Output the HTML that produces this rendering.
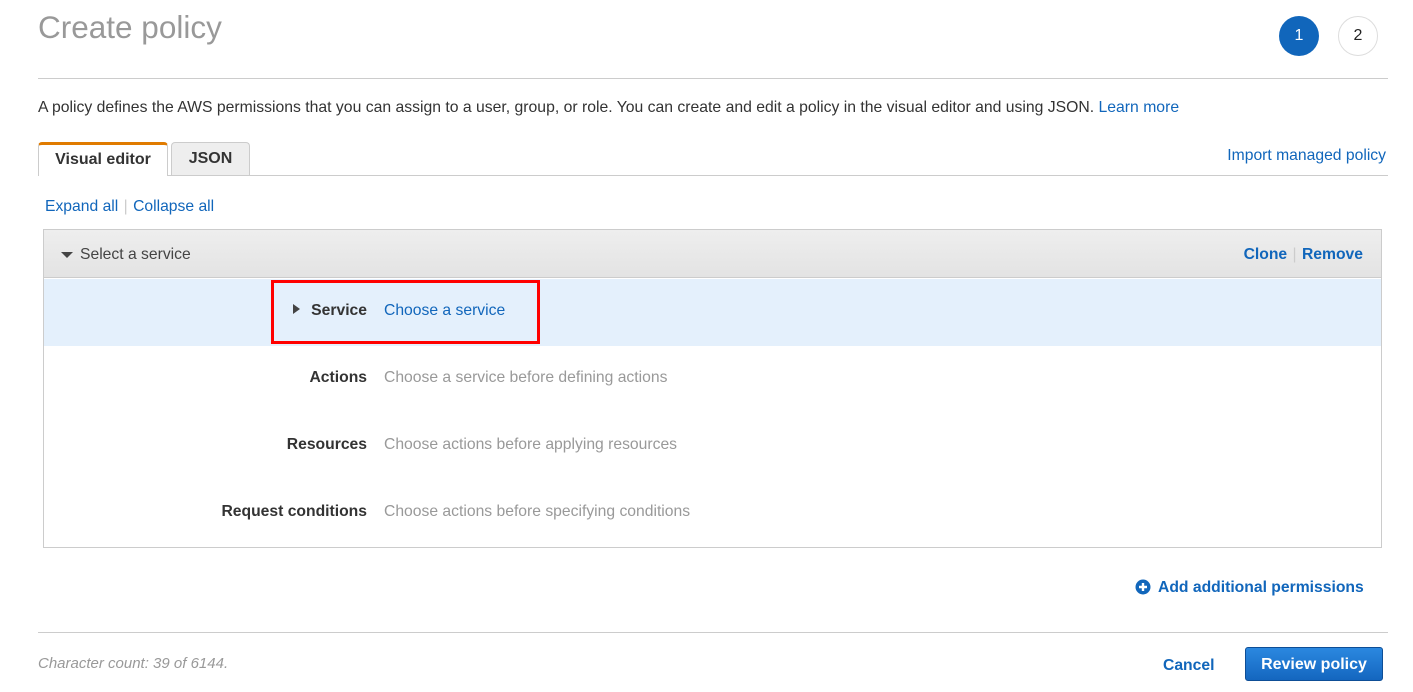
<!DOCTYPE html>
<html><head><style>
*{box-sizing:border-box;margin:0;padding:0}
body{width:1413px;height:692px;background:#fff;font-family:"Liberation Sans",Arial,sans-serif;position:relative;overflow:hidden;color:#333}
.a{position:absolute;white-space:nowrap}
.link{color:#1166bb}
.lbl{font-weight:bold;font-size:15.7px;color:#333;text-align:right;width:200px;left:167px}
.val{left:384px;font-size:15.7px;color:#999}
</style></head><body>
<div class="a" style="left:38px;top:9px;font-size:31.5px;color:#999">Create policy</div>
<div class="a" style="left:1279px;top:16px;width:40px;height:40px;border-radius:50%;background:#1166bb;color:#fff;font-size:16px;text-align:center;line-height:40px">1</div>
<div class="a" style="left:1338px;top:16px;width:40px;height:40px;border-radius:50%;border:1px solid #ddd;color:#222;font-size:16px;text-align:center;line-height:38px">2</div>
<div class="a" style="left:38px;top:78px;width:1350px;height:1px;background:#ccc"></div>
<div class="a" style="left:38px;top:99px;font-size:15.75px;color:#333">A policy defines the AWS permissions that you can assign to a user, group, or role. You can create and edit a policy in the visual editor and using JSON. <span class="link">Learn more</span></div>
<div class="a" style="left:38px;top:175px;width:1350px;height:1px;background:#ccc"></div>
<div class="a" style="left:38px;top:142px;width:130px;height:34px;background:#fff;border:1px solid #ccc;border-bottom:none;border-top:3px solid #e07b00;border-radius:4px 4px 0 0;font-weight:bold;font-size:16px;text-align:center;line-height:29px;color:#333">Visual editor</div>
<div class="a" style="left:171px;top:142px;width:79px;height:33px;background:#eee;border:1px solid #ccc;border-bottom:none;border-radius:4px 4px 0 0;font-weight:bold;font-size:16px;text-align:center;line-height:32px;color:#333">JSON</div>
<div class="a link" style="right:27px;top:147px;font-size:15.7px">Import managed policy</div>
<div class="a" style="left:45px;top:198px;font-size:15.7px"><span class="link">Expand all</span> <span style="color:#ccc;margin:0 1px">|</span> <span class="link">Collapse all</span></div>
<div class="a" style="left:43px;top:229px;width:1339px;height:319px;border:1px solid #ccc"></div>
<div class="a" style="left:44px;top:230px;width:1337px;height:48px;background:linear-gradient(#eee,#e3e3e3);border-bottom:1px solid #ccc"></div>
<div class="a" style="left:61px;top:252px;width:0;height:0;border-left:6px solid transparent;border-right:6px solid transparent;border-top:6px solid #444"></div>
<div class="a" style="left:80px;top:246px;font-size:15.7px;color:#444">Select a service</div>
<div class="a" style="right:50px;top:246px;font-size:15.7px;font-weight:bold"><span class="link">Clone</span> <span style="color:#ccc;font-weight:normal;margin:0 1px">|</span> <span class="link">Remove</span></div>
<div class="a" style="left:44px;top:279px;width:1337px;height:67px;background:#e4f0fc"></div>
<div class="a" style="left:271px;top:280px;width:269px;height:64px;border:3px solid #f00"></div>
<div class="a" style="left:293px;top:304px;width:0;height:0;border-top:5px solid transparent;border-bottom:5px solid transparent;border-left:7px solid #444"></div>
<div class="a lbl" style="top:302px">Service</div>
<div class="a val link" style="top:302px;color:#1166bb">Choose a service</div>
<div class="a lbl" style="top:369px">Actions</div>
<div class="a val" style="top:369px">Choose a service before defining actions</div>
<div class="a lbl" style="top:436px">Resources</div>
<div class="a val" style="top:436px">Choose actions before applying resources</div>
<div class="a lbl" style="top:503px">Request conditions</div>
<div class="a val" style="top:503px">Choose actions before specifying conditions</div>
<svg class="a" style="left:1135px;top:579px" width="16" height="16" viewBox="0 0 16 16"><circle cx="8" cy="8" r="7.5" fill="#1166bb"/><path d="M8 4v8M4 8h8" stroke="#fff" stroke-width="2.4"/></svg>
<div class="a link" style="left:1158px;top:579px;font-size:15.7px;font-weight:bold">Add additional permissions</div>
<div class="a" style="left:38px;top:632px;width:1350px;height:1px;background:#ccc"></div>
<div class="a" style="left:38px;top:655px;font-size:15px;font-style:italic;color:#999">Character count: 39 of 6144.</div>
<div class="a link" style="left:1163px;top:657px;font-size:15.7px;font-weight:bold">Cancel</div>
<div class="a" style="left:1245px;top:647px;width:138px;height:34px;border-radius:3px;background:linear-gradient(#2b88e0,#1466bf);border:1px solid #0e4e96;color:#fff;font-weight:bold;font-size:16px;text-align:center;line-height:33px">Review policy</div>
</body></html>
